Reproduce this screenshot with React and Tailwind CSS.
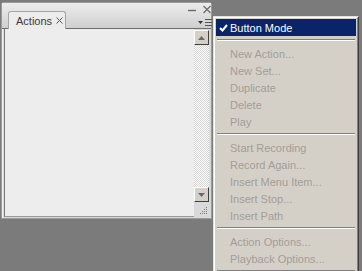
import React from "react";

const font = "font-['Liberation_Sans',Arial,sans-serif]";

const items = [
  { label: "Button Mode", checked: true, active: true },
  "sep",
  { label: "New Action..." },
  { label: "New Set..." },
  { label: "Duplicate" },
  { label: "Delete" },
  { label: "Play" },
  "sep",
  { label: "Start Recording" },
  { label: "Record Again..." },
  { label: "Insert Menu Item..." },
  { label: "Insert Stop..." },
  { label: "Insert Path" },
  "sep",
  { label: "Action Options..." },
  { label: "Playback Options..." },
  "sep",
];

function ScrollButton({ down }) {
  return (
    <div className="w-[15px] h-[15px] bg-[#d4d0c8] border border-t-white border-l-white border-r-[#404040] border-b-[#404040] flex items-center justify-center">
      <svg width="7" height="4" viewBox="0 0 7 4">
        {down ? (
          <path d="M0 0h7L3.5 4z" fill="#6a6a6a" />
        ) : (
          <path d="M0 4h7L3.5 0z" fill="#6a6a6a" />
        )}
      </svg>
    </div>
  );
}

function Panel() {
  return (
    <div className="ml-px mt-[2px] w-[211px] h-[217px] border border-[#9a9a9a] rounded-t-[3px] bg-[#d9d9d9] flex flex-col shadow-[inset_1px_1px_0_#f2f2f2]">
      {/* header */}
      <div className="relative h-[25px] shrink-0 bg-gradient-to-b from-[#ececec] via-[#dedede] to-[#cfcfcf]">
        <div className="absolute left-[6px] top-[8px] w-[58px] h-[18px] bg-[#ececec] border border-b-0 border-[#a5a5a5] rounded-t-[3px] flex items-center pl-[7px] gap-[4px]">
          <span className={`${font} text-[11px] text-[#3a3a3a] leading-none pt-px`}>Actions</span>
          <svg width="7" height="7" viewBox="0 0 7 7">
            <path d="M0.5 0.5l6 6M6.5 0.5l-6 6" stroke="#555" strokeWidth="1" />
          </svg>
        </div>
        {/* minimize / close */}
        <svg className="absolute left-[186px] top-[2px]" width="24" height="9" viewBox="0 0 24 9">
          <path d="M0 5.5h8" stroke="#6a6a6a" strokeWidth="1.4" />
          <path d="M15.5 1l7 7M22.5 1l-7 7" stroke="#6a6a6a" strokeWidth="1.2" />
        </svg>
        {/* flyout menu icon */}
        <svg className="absolute left-[196px] top-[15px]" width="14" height="9" viewBox="0 0 14 9">
          <path d="M0 3h5L2.5 6z" fill="#333" />
          <path d="M7 1.5h7M7 4.5h7M7 7.5h7" stroke="#555" strokeWidth="1" />
        </svg>
      </div>
      {/* body */}
      <div className="flex flex-1 pl-[2px] pr-px border-t border-[#6e6e6e]">
        <div className="flex-1 bg-[#ededed] border-l border-[#7a7a7a] border-b border-b-[#9a9a9a] mb-[1px]" />
        <div className="w-[16px] flex flex-col items-start pt-[1px]">
          <ScrollButton />
          <div className="w-[15px] flex-1 bg-[repeating-conic-gradient(#d4d4d4_0%_25%,#ffffff_0%_50%)] bg-[length:2px_2px]" />
          <ScrollButton down />
          <div className="h-[16px] w-[16px] flex items-end justify-end pr-[2px] pb-[3px]">
            <svg width="9" height="9" viewBox="0 0 9 9" fill="#7a7a7a">
              <rect x="7" y="1" width="1" height="1" />
              <rect x="5" y="3" width="1" height="1" />
              <rect x="7" y="3" width="1" height="1" />
              <rect x="3" y="5" width="1" height="1" />
              <rect x="5" y="5" width="1" height="1" />
              <rect x="7" y="5" width="1" height="1" />
              <rect x="1" y="7" width="1" height="1" />
              <rect x="3" y="7" width="1" height="1" />
              <rect x="5" y="7" width="1" height="1" />
              <rect x="7" y="7" width="1" height="1" />
            </svg>
          </div>
        </div>
      </div>
    </div>
  );
}

function Menu() {
  return (
    <div className="absolute left-[213px] top-[16px] w-[146px] border border-t-[#e4e2de] border-l-[#e4e2de] border-r-[#404040] border-b-[#404040]">
      <div className="border border-t-white border-l-white border-r-[#808080] border-b-[#808080] bg-[#d4d0c8] p-px">
        {items.map((it, i) =>
          it === "sep" ? (
            <div key={i} className="h-[9px] pt-[3px] px-[1px]">
              <div className="h-px bg-[#808080]" />
              <div className="h-px bg-white" />
            </div>
          ) : (
            <div
              key={i}
              className={`h-[17px] flex items-center ${it.active ? "bg-[#0a246a] text-white" : "text-[#a29e97]"}`}
            >
              <div className="w-[14px] flex justify-center pl-[1px]">
                {it.checked && (
                  <svg width="9" height="8" viewBox="0 0 9 8">
                    <path d="M1 4l2.5 2.5L8 1" stroke="white" strokeWidth="2" fill="none" />
                  </svg>
                )}
              </div>
              <span className={`${font} text-[11px] leading-none pt-px`}>{it.label}</span>
            </div>
          )
        )}
      </div>
    </div>
  );
}

export default function App() {
  return (
    <div className="relative w-[362px] h-[271px] overflow-hidden bg-[#7b7b7b]">
      <Panel />
      <Menu />
    </div>
  );
}
